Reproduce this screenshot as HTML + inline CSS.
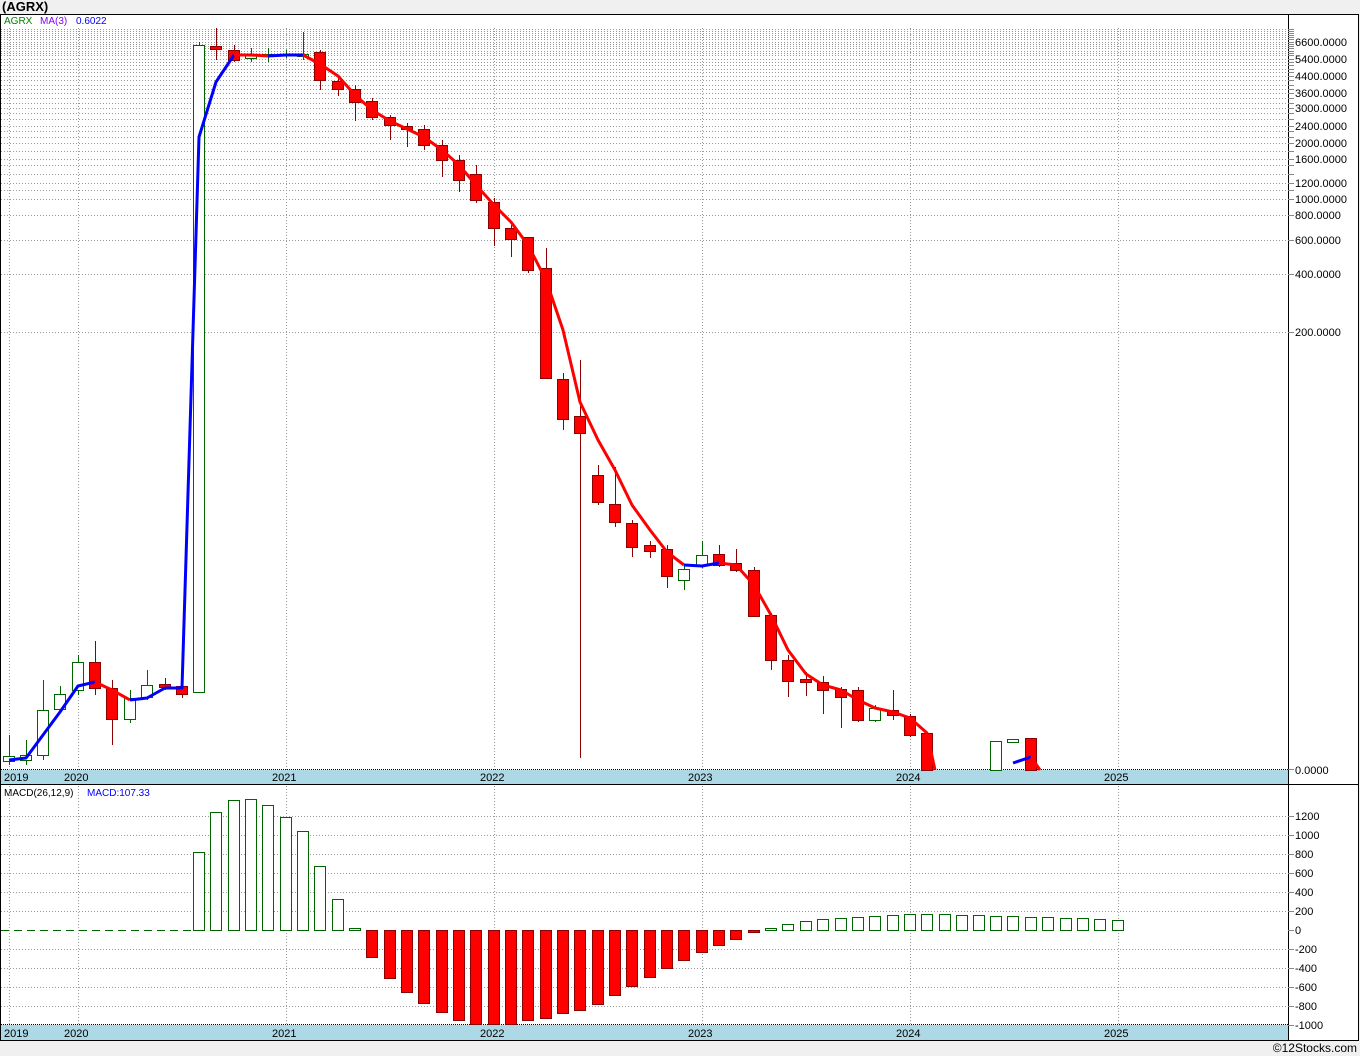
<!DOCTYPE html>
<html><head><meta charset="utf-8"><style>
html,body{margin:0;padding:0;background:#f0f0f0;width:1360px;height:1056px;overflow:hidden}
svg{display:block;font-family:"Liberation Sans",sans-serif}
</style></head><body>
<svg id="s" width="1360" height="1056" xmlns="http://www.w3.org/2000/svg">
<rect x="0" y="0" width="1360" height="1056" fill="#f0f0f0"/>
<text x="2" y="11" font-size="13" font-weight="bold" fill="#000">(AGRX)</text>
<rect x="0.5" y="14.5" width="1358" height="1026" fill="#fff" stroke="#000"/>
<line x1="0" y1="784.5" x2="1359" y2="784.5" stroke="#000"/>
<line x1="1288.5" y1="14" x2="1288.5" y2="1040" stroke="#000"/>
<rect x="1" y="770" width="1287" height="14" fill="#add8e6"/>
<rect x="1" y="1025" width="1287" height="15" fill="#add8e6"/>
<g id="grid"></g>
<g id="c"></g>
<text x="4" y="24" font-size="10" fill="#008000">AGRX</text>
<text x="40" y="24" font-size="10" fill="#8000ff">MA(3)</text>
<text x="76" y="24" font-size="10" fill="#0000ff">0.6022</text>
<text x="4" y="796" font-size="10" fill="#000">MACD(26,12,9)</text>
<text x="87" y="796" font-size="10" fill="#0000ff">MACD:107.33</text>
<text x="1357" y="1052" font-size="12" fill="#000" text-anchor="end">©12Stocks.com</text>
</svg>
<script>
const NS="http://www.w3.org/2000/svg",g=document.getElementById('grid'),c=document.getElementById('c');
function el(p,t,a,txt){const e=document.createElementNS(NS,t);for(const k in a)e.setAttribute(k,a[k]);if(txt!==undefined)e.textContent=txt;p.appendChild(e);return e;}
const dot={stroke:"#999","stroke-dasharray":"1,2","stroke-width":1};
// dense top grid
[29,31,33,35,37,39,42,44,46,48,51,53,55,59,62,65,69,72,76,80,85,89,93,98,103,108,113,119,126,131,137,143,151,159,165,174,183,190,199,215,240,274,332].forEach(y=>{
 el(g,'line',Object.assign({x1:1,x2:1288,y1:y+.5,y2:y+.5},dot));el(g,'line',{x1:1288,x2:1294,y1:y+.5,y2:y+.5,stroke:"#888"});});
el(g,'line',Object.assign({x1:1,x2:1288,y1:769.5,y2:769.5},{stroke:"#000","stroke-dasharray":"1,1"}));
el(g,'line',{x1:1288,x2:1294,y1:769.5,y2:769.5,stroke:"#888"});
[[42,"6600.0000"],[59,"5400.0000"],[76,"4400.0000"],[93,"3600.0000"],[108,"3000.0000"],[126,"2400.0000"],[143,"2000.0000"],[159,"1600.0000"],[183,"1200.0000"],[199,"1000.0000"],[215,"800.0000"],[240,"600.0000"],[274,"400.0000"],[332,"200.0000"],[770,"0.0000"]].forEach(([y,t])=>el(g,'text',{x:1295,y:y+4,"font-size":11,fill:"#000"},t));
const yrs=[[78,"2020"],[286,"2021"],[494,"2022"],[702,"2023"],[910,"2024"],[1118,"2025"]];
[[9,""]].concat(yrs).forEach(([x])=>{el(g,'line',Object.assign({x1:x+.5,x2:x+.5,y1:28,y2:770},dot));el(g,'line',Object.assign({x1:x+.5,x2:x+.5,y1:786,y2:1025},dot));});
[[4,"2019"]].concat(yrs.map(([x,t])=>[x-14,t])).forEach(([x,t])=>{el(g,'text',{x:x,y:781,"font-size":11},t);el(g,'text',{x:x,y:1037,"font-size":11},t);});
[[816,"1200"],[835,"1000"],[854,"800"],[873,"600"],[892,"400"],[911,"200"],[930,"0"],[949,"-200"],[968,"-400"],[987,"-600"],[1006,"-800"],[1025,"-1000"]].forEach(([y,t])=>{
 if(y!==1025&&y!==930)el(g,'line',Object.assign({x1:1,x2:1288,y1:y+.5,y2:y+.5},dot));
 if(y===1025)el(g,'line',{x1:1,x2:1288,y1:1024.5,y2:1024.5,stroke:"#000","stroke-dasharray":"1,1"});
 el(g,'line',{x1:1288,x2:1294,y1:y+.5,y2:y+.5,stroke:"#888"});
 el(g,'text',{x:1295,y:y+4,"font-size":11},t);});
// candles: x, high, low, top, bot, color
const C=[[9,735,765,756,761,'g'],[26,740,765,755,760,'g'],[43,680,760,710,755,'g'],[60,686,712,694,709,'g'],[78,655,695,662,690,'g'],[95,641,695,662,688,'r'],[112,680,745,688,719,'r'],[130,690,723,698,719,'g'],[147,670,700,685,697,'g'],[165,678,690,684,687,'r'],[182,680,698,686,694,'r'],[199,42,693,45,692,'g'],[216,28,60,46,49,'r'],[234,45,62,50,60,'r'],[251,48,62,55,58,'g'],[268,48,62,54,56,'g'],[286,50,58,54,55,'g'],[303,32,60,54,56,'g'],[320,50,90,52,80,'r'],[338,78,96,81,89,'r'],[355,85,121,89,102,'r'],[372,98,120,101,117,'r'],[390,115,140,117,125,'r'],[407,123,147,126,129,'r'],[424,125,150,129,145,'r'],[442,140,177,145,160,'r'],[459,155,192,160,180,'r'],[476,165,203,174,200,'r'],[494,198,246,202,228,'r'],[511,225,257,228,239,'r'],[528,237,273,237,270,'r'],[546,248,378,268,378,'r'],[563,373,430,379,419,'r'],[580,360,758,416,433,'r'],[598,465,505,475,502,'r'],[615,467,527,504,522,'r'],[632,520,557,523,547,'r'],[650,541,558,545,551,'r'],[667,545,588,549,576,'r'],[684,565,590,569,580,'g'],[702,541,568,555,565,'g'],[719,545,567,554,565,'r'],[736,549,572,563,570,'r'],[754,567,616,570,616,'r'],[771,613,670,615,660,'r'],[788,655,697,660,681,'r'],[806,672,696,679,682,'r'],[823,676,714,682,690,'r'],[841,687,728,689,697,'r'],[858,687,722,690,720,'r'],[875,705,722,708,720,'g'],[893,690,720,710,715,'r'],[910,714,737,716,735,'r'],[927,733,770,733,770,'r'],[996,741,770,741,770,'g'],[1013,739,742,739,742,'g'],[1031,738,770,738,770,'r']];
C.forEach(([x,h,l,t,b,k])=>{const col=k=='g'?'#006400':'#8b0000';
 el(c,'line',{x1:x+.5,x2:x+.5,y1:h,y2:l,stroke:col});
 el(c,'rect',{x:x-5.5,y:t+.5,width:11,height:Math.max(b-t,1),fill:k=='g'?'#fff':'#f00',stroke:k=='g'?'#006400':'#8b0000'});});
function pl(pts,col){el(c,'polyline',{points:pts,fill:'none',stroke:col,"stroke-width":3,"stroke-linejoin":"round"});}
pl("9,760 26,758 43,735 60,712 78,686 95,682","#0000ff");
pl("95,682 112,690 130,700","#f00");
pl("130,700 147,698 165,688 182,688 199,137 216,82 234,55","#0000ff");
pl("234,55 251,55 268,56","#f00");
pl("268,56 286,55 303,55","#0000ff");
pl("303,55 320,64 338,76 355,95 372,110 390,121 407,129 424,137 442,150 459,165 476,185 494,205 511,222 528,245 546,280 563,330 580,402 598,440 615,470 632,505 650,530 667,552 684,565","#f00");
pl("684,565 702,566 719,563","#0000ff");
pl("719,563 736,565 754,585 771,615 788,650 806,674 823,685 841,690 858,700 875,708 893,712 910,718 927,733 935,770","#f00");
pl("1013,763 1031,757","#0000ff");pl("1031,757 1040,770","#f00");
// MACD
el(c,'line',{x1:1,x2:192,y1:930.5,y2:930.5,stroke:"#006400","stroke-dasharray":"8,5"});
const M=[[199,852],[216,812],[234,800],[251,799],[268,805],[286,817],[303,831],[320,866],[338,899],[355,928],[372,957],[390,978],[407,992],[424,1003],[442,1012],[459,1020],[476,1024],[494,1024],[511,1024],[528,1020],[546,1018],[563,1013],[580,1010],[598,1004],[615,995],[632,986],[650,977],[667,968],[684,960],[702,952],[719,945],[736,939],[754,932],[771,928],[788,924],[806,921],[823,919],[841,918],[858,917],[875,916],[893,915],[910,914],[927,914],[945,914],[962,915],[979,915],[996,916],[1013,916],[1031,917],[1048,917],[1066,918],[1083,918],[1100,919],[1118,920]];
M.forEach(([x,y])=>{const up=y<930;const t=up?y:930,h=Math.max(Math.abs(y-930),1);
 el(c,'rect',{x:x-5.5,y:t+.5,width:11,height:h,fill:up?'#fff':'#f00',stroke:up?'#006400':'#8b0000'});});
</script>
</body></html>
